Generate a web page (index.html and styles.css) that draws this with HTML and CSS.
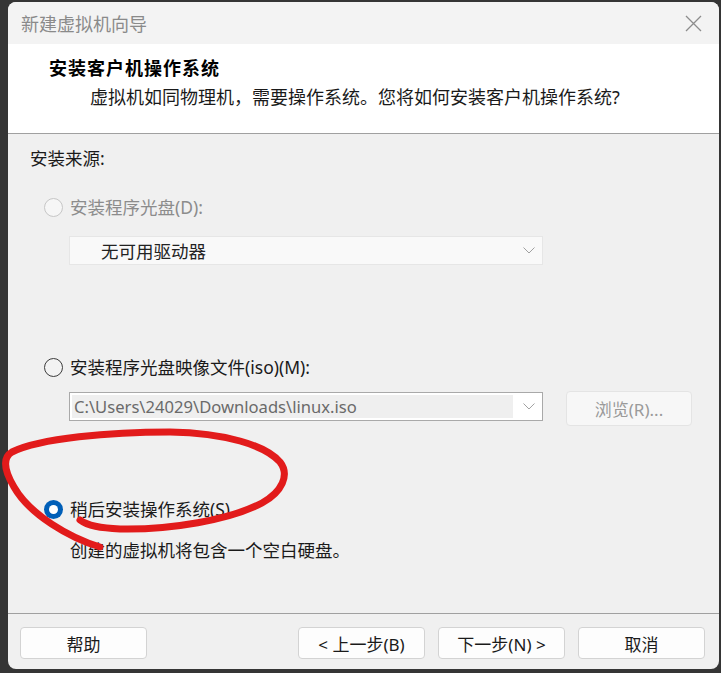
FILE: index.html
```html
<!DOCTYPE html>
<html lang="zh-CN">
<head>
  <meta charset="UTF-8">
  <title>新建虚拟机向导</title>
  <link rel="stylesheet" href="styles.css">
</head>
<body>

  <div class="window">
    <div class="titlebar">
      <span class="title">新建虚拟机向导</span>
      <svg class="close" viewBox="0 0 17 17" width="17" height="17">
        <path d="M1 1 L16 16 M16 1 L1 16" stroke="#8c8c8c" stroke-width="1.3" fill="none"/>
      </svg>
    </div>

    <div class="header">
      <h1>安装客户机操作系统</h1>
      <p class="subtitle">虚拟机如同物理机，需要操作系统。您将如何安装客户机操作系统?</p>
    </div>

    <div class="content">
      <div class="section-label">安装来源:</div>

      <div class="option option-disc disabled">
        <span class="radio"></span>
        <span>安装程序光盘(D):</span>
      </div>
      <div class="select">
        <span>无可用驱动器</span>
        <svg class="chevron" viewBox="0 0 12 7" width="12" height="7">
          <polyline points="0.5,0.5 6,6 11.5,0.5" stroke="#a0a0a0" fill="none"/>
        </svg>
      </div>

      <div class="option option-iso">
        <span class="radio"></span>
        <span>安装程序光盘映像文件(iso)(M):</span>
      </div>
      <div class="iso-row">
        <div class="combo">
          <div class="combo-field">C:\Users\24029\Downloads\linux.iso</div>
          <svg class="chevron" viewBox="0 0 12 7" width="12" height="7">
            <polyline points="0.5,0.5 6,6 11.5,0.5" stroke="#a0a0a0" fill="none"/>
          </svg>
        </div>
        <button class="browse">浏览(R)...</button>
      </div>

      <div class="option option-later">
        <span class="radio checked"></span>
        <span>稍后安装操作系统(S)。</span>
      </div>
      <p class="note">创建的虚拟机将包含一个空白硬盘。</p>
    </div>

    <div class="footer">
      <button class="btn">帮助</button>
      <button class="btn btn-back">&lt; 上一步(B)</button>
      <button class="btn">下一步(N) &gt;</button>
      <button class="btn">取消</button>
    </div>

    <!-- hand drawn red mark -->
    <svg class="annotation" viewBox="0 0 721 673" width="721" height="673">
      <path d="M100 547 C 70 538, 30 515, 14 487 C 4 470, 2 458, 12 452 C 40 438, 110 432, 170 432 C 225 433, 265 445, 280 462 C 290 475, 282 492, 262 503 C 230 520, 170 530, 120 529 C 100 528, 88 526, 80 520"
            stroke="#e21b1b" stroke-width="7" fill="none" stroke-linecap="round" stroke-linejoin="round"/>
    </svg>
  </div>

</body>
</html>
```

FILE: styles.css
```css
body {
  margin: 0;
  background-color: #353535;
  font-family: "Noto Sans", "Noto Sans CJK SC", sans-serif;
  color: #1a1a1a;
}

.window {
  position: relative;
  margin: 2px 0 0 8px;
  width: 711px;
  height: 667px;
  background-color: #f0f0f0;
  border-radius: 8px;
}

.titlebar {
  height: 42px;
  display: flex;
  align-items: center;
  justify-content: space-between;
  padding: 0 17px 0 13px;
  background-color: #f3f3f3;
  border-radius: 8px 8px 0 0;
}

.title {
  font-size: 18px;
  color: #8a8a8a;
}

.header {
  box-sizing: border-box;
  height: 90px;
  padding: 12px 0 0 41px;
  background-color: #fff;
  border-bottom: 1px solid #a0a0a0;
}

.header h1 {
  margin: 0;
  font-size: 18px;
  line-height: 24px;
  font-weight: bold;
  letter-spacing: 1px;
  color: #000;
}

.subtitle {
  margin: 5px 0 0 41px;
  font-size: 18px;
  line-height: 24px;
}

.content {
  box-sizing: border-box;
  height: 480px;
  padding: 12px 0 0 22px;
  border-bottom: 1px solid #a0a0a0;
  font-size: 17.5px;
  line-height: 24px;
}

.option {
  display: flex;
  align-items: center;
  gap: 7px;
  height: 24px;
  margin-left: 14px;
}

.option-disc {
  margin-top: 25px;
}

.option-iso {
  margin-top: 90px;
}

.option-later {
  margin-top: 76px;
}

.disabled {
  color: #8c8c8c;
}

.radio {
  box-sizing: border-box;
  width: 19px;
  height: 19px;
  border: 1px solid #3c3c3c;
  border-radius: 50%;
  background-color: #f3f3f3;
  position: relative;
}

.disabled .radio {
  border-color: #c6c6c6;
  background-color: #f6f6f6;
}

.radio.checked {
  border: none;
  background-color: #005fb8;
}

.radio.checked::after {
  content: "";
  position: absolute;
  left: 5px;
  top: 5px;
  width: 9px;
  height: 9px;
  border-radius: 50%;
  background-color: #fff;
}

.select {
  box-sizing: border-box;
  display: flex;
  align-items: center;
  justify-content: space-between;
  width: 474px;
  height: 29px;
  margin: 17px 0 0 39px;
  padding: 0 7px 0 31px;
  background-color: #f9f9f9;
  border: 1px solid #e6e6e6;
  color: #222;
}

.iso-row {
  display: flex;
  align-items: flex-start;
  gap: 23px;
  height: 29px;
  margin: 13px 0 0 39px;
}

.combo {
  box-sizing: border-box;
  display: flex;
  align-items: center;
  width: 474px;
  height: 29px;
  padding: 2px 7px 2px 2px;
  background-color: #fff;
  border: 1px solid #a9a9a9;
}

.combo-field {
  width: 441px;
  height: 23px;
  margin-right: 10px;
  padding-left: 2px;
  background-color: #efefef;
  color: #6a6a6a;
  font-size: 16.6px;
  line-height: 23px;
  white-space: nowrap;
}

.browse {
  width: 126px;
  height: 35px;
  margin-top: -1px;
  background-color: #f7f7f7;
  border: 1px solid #e4e4e4;
  border-radius: 4px;
  color: #9a9a9a;
  font-family: inherit;
  font-size: 17px;
}

.note {
  margin: 17px 0 0 40px;
}

.footer {
  display: flex;
  gap: 13px;
  padding: 13px 14px 0 12px;
}

.btn {
  width: 127px;
  height: 32px;
  background-color: #fdfdfd;
  border: 1px solid #d3d3d3;
  border-radius: 4px;
  color: #1a1a1a;
  font-family: inherit;
  font-size: 17px;
}

.btn-back {
  margin-left: auto;
}

.annotation {
  position: absolute;
  left: -8px;
  top: -2px;
  pointer-events: none;
  overflow: visible;
}
```
